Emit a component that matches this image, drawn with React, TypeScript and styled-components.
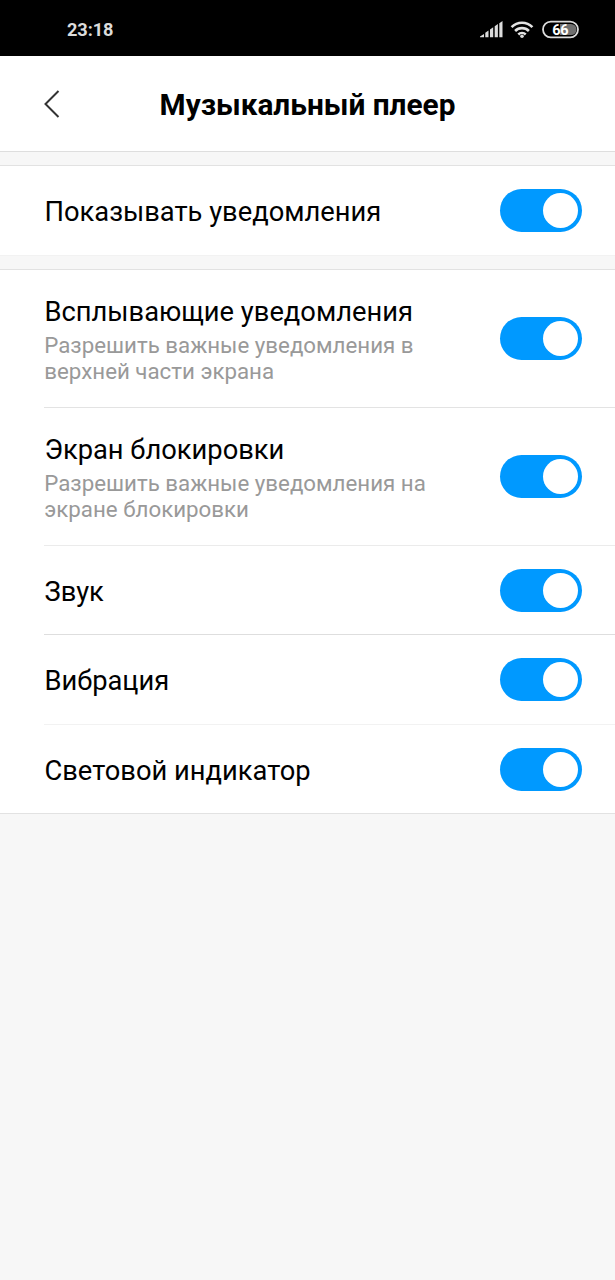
import React from 'react';
import styled, { createGlobalStyle } from 'styled-components';

const GlobalStyle = createGlobalStyle`
  * { box-sizing: border-box; }
  body { margin: 0; background: #f7f7f7; font-family: Roboto, sans-serif; color: #000; }
`;

const Screen = styled.main`
  width: 615px;
  height: 1280px;
  overflow: hidden;
  background: #f7f7f7;
`;

const StatusBar = styled.div`
  height: 56px;
  padding: 3px 35px 0 67px;
  display: flex;
  align-items: center;
  justify-content: space-between;
  background: #000;
  color: #dcdcdc;
`;

const Clock = styled.span`
  font-size: 18.2px;
  line-height: 24px;
  padding-top: 1px;
  font-weight: 700;
  letter-spacing: -0.1px;
`;

const Header = styled.header`
  height: 96px;
  padding: 0 44px;
  display: grid;
  grid-template-columns: 16px 1fr 16px;
  align-items: center;
  background: #fff;
  border-bottom: 1px solid #dedede;
`;

const BackButton = styled.button`
  padding: 0;
  border: 0;
  background: none;
  display: flex;
`;

const Title = styled.h1`
  margin: 2px 0 0;
  text-align: center;
  font-size: 29.8px;
  line-height: 36px;
  font-weight: 700;
`;

const Section = styled.section<{ $edge?: string }>`
  margin-top: 13px;
  padding-left: 44px;
  background: #fff;
  border-top: 1px solid #e2e2e2;
  border-bottom: 1px solid ${(p) => p.$edge ?? '#e2e2e2'};
`;

const Row = styled.div<{ $height: number; $line?: string }>`
  height: ${(p) => p.$height}px;
  padding-right: 33px;
  display: flex;
  align-items: center;
  justify-content: space-between;
  border-top: 1px solid ${(p) => p.$line ?? '#e3e3e3'};
  &:first-child { border-top: 0; }
`;

const Label = styled.div<{ $lead: number }>`
  font-size: 27.3px;
  line-height: 34px;
  padding-top: ${(p) => p.$lead}px;
  padding-left: 0.5px;
  white-space: nowrap;
`;

const Hint = styled.div`
  margin: 3px 0 1px;
  padding-left: 0.3px;
  font-size: 22.3px;
  line-height: 26px;
  color: #999;
  white-space: pre;
`;

const Switch = styled.button`
  flex: none;
  width: 82px;
  height: 43px;
  padding: 4px;
  border: 0;
  border-radius: 22px;
  display: flex;
  justify-content: flex-end;
  background: #0099ff;
`;

const Knob = styled.span`
  width: 35px;
  height: 35px;
  border-radius: 50%;
  background: #fff;
`;

const Toggle = () => (
  <Switch role="switch" aria-checked="true"><Knob /></Switch>
);

type SettingProps = { label: string; hint?: string; height: number; lead?: number; line?: string };

const Setting = ({ label, hint, height, lead = 2, line }: SettingProps) => (
  <Row $height={height} $line={line}>
    <div>
      <Label $lead={lead}>{label}</Label>
      {hint && <Hint>{hint}</Hint>}
    </div>
    <Toggle />
  </Row>
);

const StatusIcons = () => (
  <svg width="100" height="20" viewBox="480 20 100 20" fill="#dcdcdc">
    <path d="M480 37.300v-.8l4-2.500v3.300zM485.300 32.800l3.200-2.300v6.800h-3.200zM490 29.500l3.200-2.300v10.100H490zM494.700 26.300l3.200-2.300v13.300h-3.200zM499.300 23.300l3.200-2.300v16.300h-3.200z" />
    <g fill="none" stroke="#e4e4e4" strokeWidth="2.600">
      <path d="M511.600 27.200a14.500 14.500 0 0 1 20.800 0M515.100 31a9.800 9.800 0 0 1 13.800 0M518.300 34.500a5.300 5.300 0 0 1 7.400 0" />
    </g>
    <circle cx="522" cy="36.200" r="1.800" />
    <path d="M560 24h11a5.500 5.500 0 0 1 0 11h-11z" fill="#707070" />
    <rect x="543" y="21.700" width="35" height="15.600" rx="7.800" fill="none" stroke="#dcdcdc" strokeWidth="1.800" />
    <text x="560.300" y="34.800" textAnchor="middle" fontFamily="Roboto" fontSize="14.500" fontWeight="700" letterSpacing="-0.300" fill="#fff">66</text>
  </svg>
);

export default function App() {
  return (
    <Screen>
      <GlobalStyle />
      <StatusBar><Clock>23:18</Clock><StatusIcons /></StatusBar>
      <Header>
        <BackButton aria-label="Назад">
          <svg width="16" height="28" viewBox="0 0 16 28" fill="none" stroke="#333" strokeWidth="2"><path d="M14.500 1 1.500 14l13 13" /></svg>
        </BackButton>
        <Title>Музыкальный плеер</Title>
      </Header>
      <Section $edge="#f2f2f2"><Setting label="Показывать уведомления" height={89} /></Section>
      <Section>
        <Setting height={137} label="Всплывающие уведомления" hint={'Разрешить важные уведомления в\nверхней части экрана'} />
        <Setting height={138} label="Экран блокировки" hint={'Разрешить важные уведомления на\nэкране блокировки'} />
        <Setting height={89} lead={4} label="Звук" line="#ebebeb" />
        <Setting height={90} label="Вибрация" line="#dedede" />
        <Setting height={89} lead={4} label="Световой индикатор" line="#f2f2f2" />
      </Section>
    </Screen>
  );
}
